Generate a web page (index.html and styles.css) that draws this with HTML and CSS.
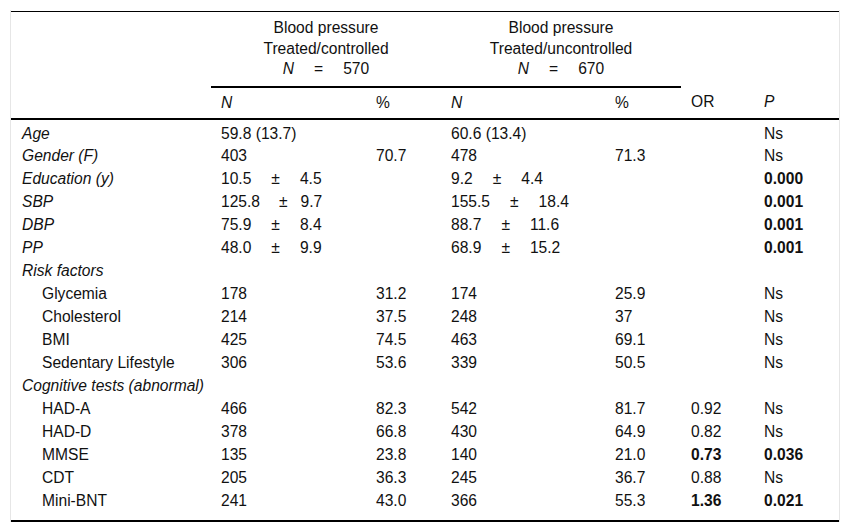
FILE: index.html
```html
<!DOCTYPE html>
<html lang="en">
<head>
<meta charset="utf-8">
<title>Blood pressure table</title>
<link rel="stylesheet" href="styles.css">
</head>
<body>
<div class="frame">
<table class="tbl">
  <colgroup>
    <col class="c-label">
    <col class="c-n1">
    <col class="c-p1">
    <col class="c-n2">
    <col class="c-p2">
    <col class="c-or">
    <col class="c-p">
  </colgroup>
  <thead>
    <tr class="grp">
      <th class="blank"></th>
      <th class="group" colspan="2">Blood pressure<br>Treated/controlled<br><i>N</i><span class="eq">=</span>570</th>
      <th class="group" colspan="2">Blood pressure<br>Treated/uncontrolled<br><i>N</i><span class="eq">=</span>670</th>
      <th class="blank"></th>
      <th class="blank"></th>
    </tr>
    <tr class="sub">
      <th class="lbl"></th>
      <th><i>N</i></th>
      <th>%</th>
      <th><i>N</i></th>
      <th>%</th>
      <th>OR</th>
      <th><i>P</i></th>
    </tr>
  </thead>
  <tbody>
    <tr class="first">
      <td class="lbl"><i>Age</i></td><td>59.8 (13.7)</td><td></td><td>60.6 (13.4)</td><td></td><td></td><td>Ns</td>
    </tr>
    <tr>
      <td class="lbl"><i>Gender (F)</i></td><td>403</td><td>70.7</td><td>478</td><td>71.3</td><td></td><td>Ns</td>
    </tr>
    <tr>
      <td class="lbl"><i>Education (y)</i></td><td>10.5<span class="pm">±</span>4.5</td><td></td><td>9.2<span class="pm">±</span>4.4</td><td></td><td></td><td><b>0.000</b></td>
    </tr>
    <tr>
      <td class="lbl"><i>SBP</i></td><td>125.8<span class="pm sb">±</span>9.7</td><td></td><td>155.5<span class="pm">±</span>18.4</td><td></td><td></td><td><b>0.001</b></td>
    </tr>
    <tr>
      <td class="lbl"><i>DBP</i></td><td>75.9<span class="pm">±</span>8.4</td><td></td><td>88.7<span class="pm">±</span>11.6</td><td></td><td></td><td><b>0.001</b></td>
    </tr>
    <tr>
      <td class="lbl"><i>PP</i></td><td>48.0<span class="pm">±</span>9.9</td><td></td><td>68.9<span class="pm">±</span>15.2</td><td></td><td></td><td><b>0.001</b></td>
    </tr>
    <tr>
      <td class="lbl" colspan="7"><i>Risk factors</i></td>
    </tr>
    <tr>
      <td class="lbl ind">Glycemia</td><td>178</td><td>31.2</td><td>174</td><td>25.9</td><td></td><td>Ns</td>
    </tr>
    <tr>
      <td class="lbl ind">Cholesterol</td><td>214</td><td>37.5</td><td>248</td><td>37</td><td></td><td>Ns</td>
    </tr>
    <tr>
      <td class="lbl ind">BMI</td><td>425</td><td>74.5</td><td>463</td><td>69.1</td><td></td><td>Ns</td>
    </tr>
    <tr>
      <td class="lbl ind">Sedentary Lifestyle</td><td>306</td><td>53.6</td><td>339</td><td>50.5</td><td></td><td>Ns</td>
    </tr>
    <tr>
      <td class="lbl" colspan="7"><i>Cognitive tests (abnormal)</i></td>
    </tr>
    <tr>
      <td class="lbl ind">HAD-A</td><td>466</td><td>82.3</td><td>542</td><td>81.7</td><td>0.92</td><td>Ns</td>
    </tr>
    <tr>
      <td class="lbl ind">HAD-D</td><td>378</td><td>66.8</td><td>430</td><td>64.9</td><td>0.82</td><td>Ns</td>
    </tr>
    <tr>
      <td class="lbl ind">MMSE</td><td>135</td><td>23.8</td><td>140</td><td>21.0</td><td><b>0.73</b></td><td><b>0.036</b></td>
    </tr>
    <tr>
      <td class="lbl ind">CDT</td><td>205</td><td>36.3</td><td>245</td><td>36.7</td><td>0.88</td><td>Ns</td>
    </tr>
    <tr class="last">
      <td class="lbl ind">Mini-BNT</td><td>241</td><td>43.0</td><td>366</td><td>55.3</td><td><b>1.36</b></td><td><b>0.021</b></td>
    </tr>
  </tbody>
</table>
</div>
</body>
</html>
```

FILE: styles.css
```css
html, body {
  margin: 0;
  padding: 0;
  background: #fff;
}

body {
  font-family: "Liberation Sans", Arial, sans-serif;
  font-size: 15.6px;
  color: #111;
}

.frame {
  margin: 10px 0 0 10px;
  width: 828px;
  padding-top: 1px;
  border-left: 1px solid #e6e6e6;
  border-right: 1px solid #e6e6e6;
}

.tbl {
  width: 828px;
  table-layout: fixed;
  border-collapse: collapse;
  border-top: 1px solid #000;
  border-bottom: 2px solid #000;
}

.c-label { width: 200px; }
.c-n1 { width: 155px; }
.c-p1 { width: 75px; }
.c-n2 { width: 164px; }
.c-p2 { width: 76px; }
.c-or { width: 73px; }
.c-p { width: 85px; }

.tbl th,
.tbl td {
  padding: 4px 10px 1px 10px;
  line-height: 18px;
  text-align: left;
  vertical-align: top;
  font-weight: normal;
  white-space: nowrap;
}

.tbl .grp th {
  padding-top: 6px;
  padding-bottom: 6px;
  line-height: 20.5px;
}

.tbl .grp th.group {
  text-align: center;
  border-bottom: 2px solid #000;
}

.tbl .sub th {
  padding-top: 6px;
  padding-bottom: 6px;
  border-bottom: 2px solid #000;
}

.eq {
  margin: 0 20px;
}

.pm {
  margin: 0 20px;
}

.pm.sb {
  margin: 0 13px 0 19px;
}

.tbl td.lbl {
  padding-left: 11px;
}

.tbl td.ind {
  padding-left: 31px;
}

.tbl tr.first td {
  padding-top: 5px;
  padding-bottom: 0;
}

.tbl tr.last td {
  padding-bottom: 10px;
}

b {
  font-weight: bold;
}
```
